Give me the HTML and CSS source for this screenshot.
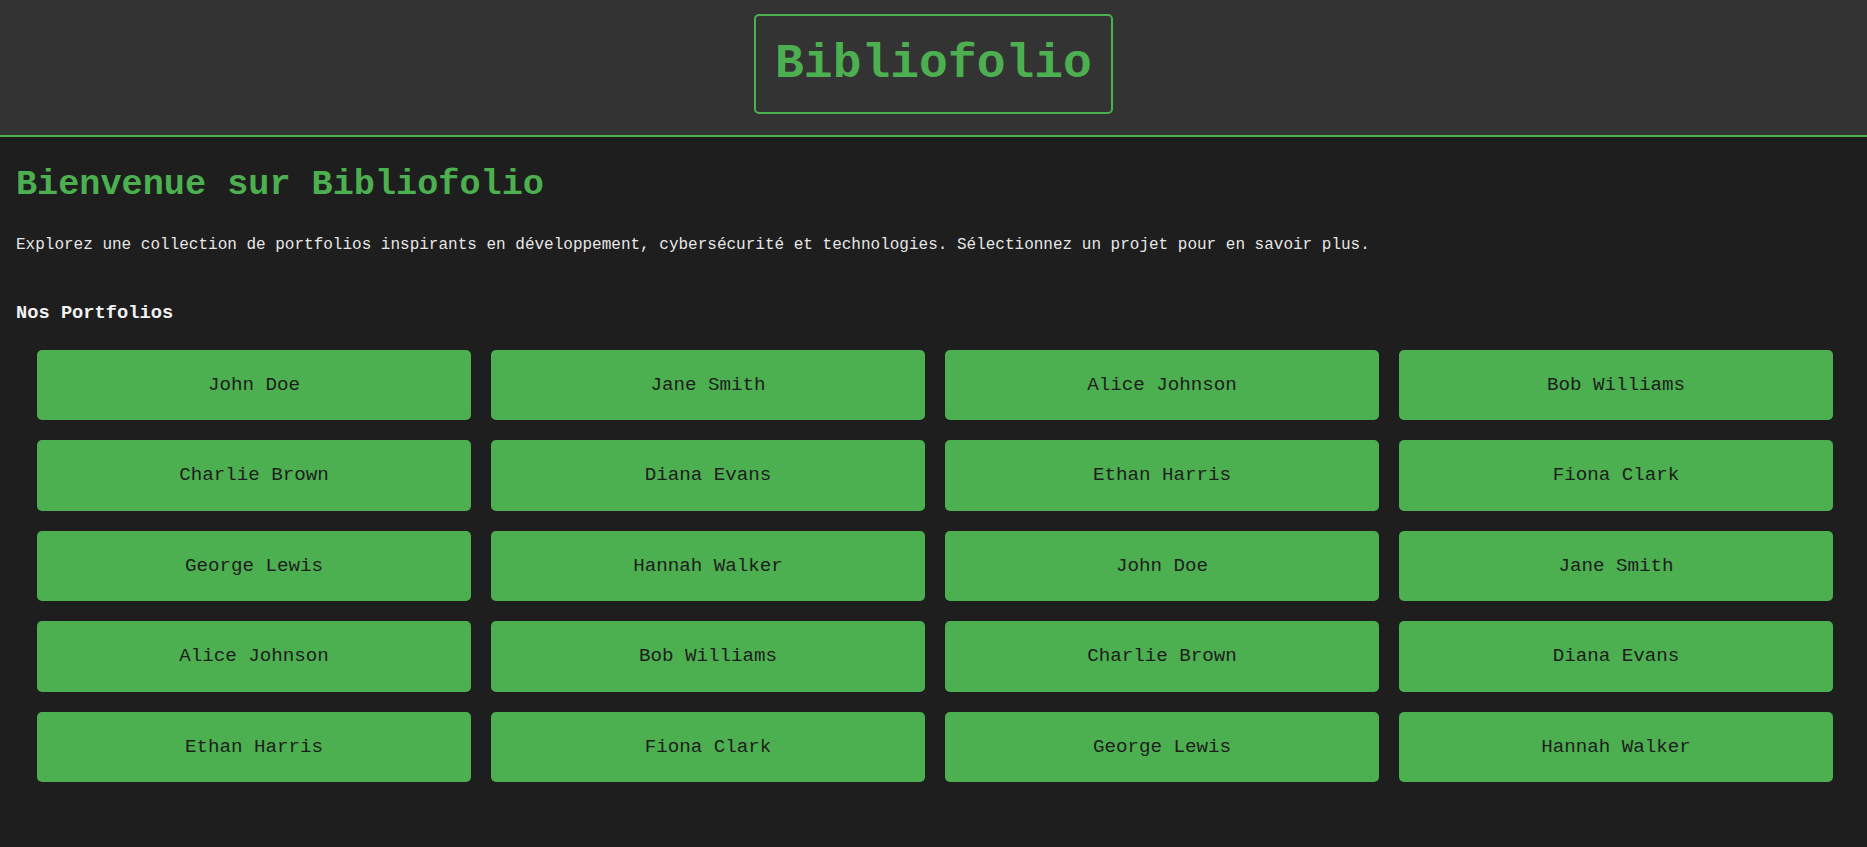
FILE: index.html
```html
<!DOCTYPE html>
<html lang="fr">
<head>
<meta charset="utf-8">
<title>Bibliofolio</title>
<link rel="stylesheet" href="styles.css">
</head>
<body>
<header class="site-header">
  <h1 class="logo">Bibliofolio</h1>
</header>
<main class="content">
  <h2 class="welcome">Bienvenue sur Bibliofolio</h2>
  <p class="intro">Explorez une collection de portfolios inspirants en développement, cybersécurité et technologies. Sélectionnez un projet pour en savoir plus.</p>
  <section class="portfolios">
    <h3 class="section-title">Nos Portfolios</h3>
    <div class="grid">
      <a class="card">John Doe</a>
      <a class="card">Jane Smith</a>
      <a class="card">Alice Johnson</a>
      <a class="card">Bob Williams</a>
      <a class="card">Charlie Brown</a>
      <a class="card">Diana Evans</a>
      <a class="card">Ethan Harris</a>
      <a class="card">Fiona Clark</a>
      <a class="card">George Lewis</a>
      <a class="card">Hannah Walker</a>
      <a class="card">John Doe</a>
      <a class="card">Jane Smith</a>
      <a class="card">Alice Johnson</a>
      <a class="card">Bob Williams</a>
      <a class="card">Charlie Brown</a>
      <a class="card">Diana Evans</a>
      <a class="card">Ethan Harris</a>
      <a class="card">Fiona Clark</a>
      <a class="card">George Lewis</a>
      <a class="card">Hannah Walker</a>
    </div>
  </section>
</main>
</body>
</html>
```

FILE: styles.css
```css
* {
  box-sizing: border-box;
}

html, body {
  margin: 0;
  padding: 0;
}

body {
  background: #1e1e1e;
  color: #e0e0e0;
  font-family: "Courier New", "Liberation Mono", monospace;
  font-size: 16px;
}

.site-header {
  background: #333333;
  border-bottom: 2px solid #4caf50;
  padding: 14px 0 21px;
  display: flex;
  justify-content: center;
}

.logo {
  margin: 0;
  font-size: 48px;
  font-weight: bold;
  color: #4caf50;
  border: 2px solid #4caf50;
  border-radius: 5px;
  padding: 21px 19px;
  line-height: 54.4px;
}

.content {
  padding: 28px 16px 20px;
}

.welcome {
  margin: 0 0 31px;
  font-size: 35.2px;
  font-weight: bold;
  color: #4caf50;
  line-height: 40px;
}

.intro {
  margin: 0 0 49px;
  font-size: 16px;
  color: #e6e6e6;
  line-height: 18px;
}

.section-title {
  margin: 0 0 25px;
  font-size: 18.72px;
  font-weight: bold;
  color: #f2f2f2;
  line-height: 21.5px;
}

.grid {
  display: grid;
  grid-template-columns: repeat(4, 1fr);
  gap: 20px;
  padding: 0 18px 0 21px;
}

.card {
  background: #4caf50;
  color: #1e1e1e;
  border-radius: 5px;
  padding: 24px 10px;
  font-size: 19.2px;
  line-height: 22.5px;
  text-align: center;
  text-decoration: none;
}
```
